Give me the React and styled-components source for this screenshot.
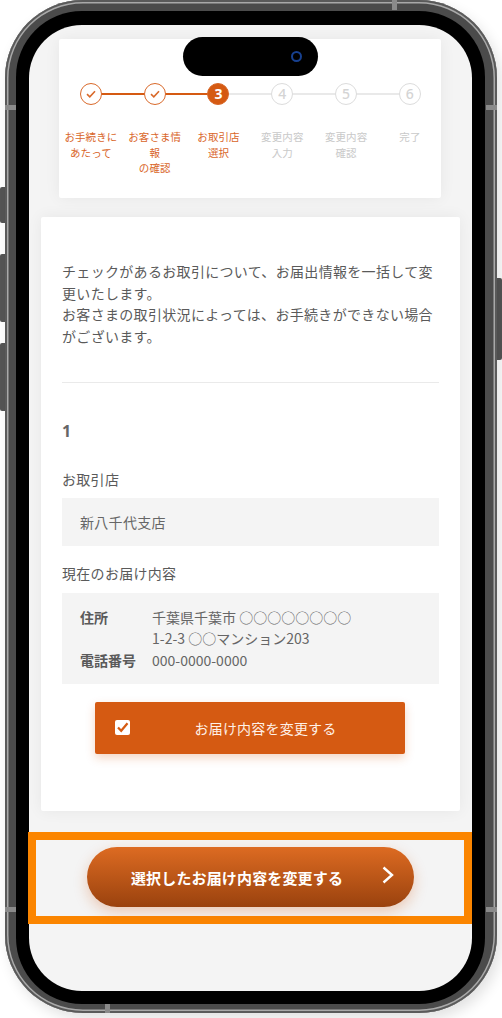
import React from "react";
import styled, { createGlobalStyle } from "styled-components";

const Global = createGlobalStyle`
  html, body { margin: 0; padding: 0; background: #fff; }
  body {
    width: 502px;
    height: 1018px;
    overflow: hidden;
    font-family: "Noto Sans CJK JP", "Noto Sans", sans-serif;
  }
  * { box-sizing: border-box; }
`;

const Page = styled.div`
  position: relative;
  width: 502px;
  height: 1018px;
  padding: 0 5px;
`;

const SideButton = styled.div`
  position: absolute;
  width: 6px;
  top: ${(p) => p.$top}px;
  height: ${(p) => p.$height}px;
  ${(p) => (p.$right ? "right: 0;" : "left: 0;")}
  background: #555;
  border-radius: ${(p) => (p.$right ? "0 2px 2px 0" : "2px 0 0 2px")};
`;

const Shell = styled.div`
  position: relative;
  width: 492px;
  height: 1013px;
  padding: 11px 12px 9px 11px;
  border-radius: 78px;
  background: #4b4b4b;
  box-shadow: inset 0 0 0 2px #5a5a5a, inset 0 0 0 3.5px #a9a9a9,
    4px 6px 14px rgba(0, 0, 0, 0.12);
`;

const Band = styled.div`
  position: absolute;
  background: #8a8a8a;
  ${(p) =>
    p.$vertical
      ? `width: 5px; height: 10px; left: ${p.$pos}px; ${p.$bottom ? "bottom: 0;" : "top: 0;"}`
      : `width: 11px; height: 5px; top: ${p.$pos}px; ${p.$right ? "right: 0;" : "left: 0;"}`}
`;

const Bezel = styled.div`
  position: relative;
  height: 100%;
  padding: 14px 13px 13px 13px;
  border-radius: 66px;
  background: #000;
`;

const Screen = styled.div`
  height: 100%;
  padding-top: 14px;
  border-radius: 53px;
  background: #f4f4f4;
  color: #5a5a5a;
`;

const Island = styled.div`
  position: absolute;
  top: 26px;
  left: 167px;
  width: 135px;
  height: 39px;
  padding-right: 16px;
  display: flex;
  align-items: center;
  justify-content: flex-end;
  border-radius: 20px;
  background: #000;
`;

const Camera = styled.span`
  width: 11px;
  height: 11px;
  border: 2px solid #17408f;
  border-radius: 50%;
`;

const StepCard = styled.div`
  width: 382px;
  height: 159px;
  margin-left: 30px;
  padding-top: 44px;
  display: grid;
  grid-template-columns: repeat(6, 63.8px);
  align-items: start;
  border-radius: 2px;
  background: #fff;
  box-shadow: 0 0 16px rgba(0, 0, 0, 0.06);
`;

const Step = styled.div`
  position: relative;
  display: flex;
  flex-direction: column;
  align-items: center;

  &::before {
    content: "";
    position: absolute;
    top: 10px;
    left: 50%;
    width: 100%;
    height: 2px;
    background: ${(p) => (p.$lineDone ? "#d55a12" : "#e9e9e9")};
    display: ${(p) => (p.$last ? "none" : "block")};
  }
`;

const Circle = styled.div`
  position: relative;
  width: 22px;
  height: 22px;
  display: flex;
  align-items: center;
  justify-content: center;
  border-radius: 50%;
  font-family: "Noto Sans", sans-serif;
  font-size: 14px;
  font-weight: ${(p) => (p.$state === "current" ? 700 : 500)};
  line-height: 1;
  background: ${(p) => (p.$state === "current" ? "#d55a12" : "#fff")};
  color: ${(p) => (p.$state === "current" ? "#fff" : "#d4d4d4")};
  border: 1px solid ${(p) => (p.$state === "todo" ? "#dcdcdc" : "#d9692a")};
`;

const StepLabel = styled.div`
  width: 100%;
  margin-top: 24px;
  padding: 0 3px;
  text-align: center;
  font-size: 10.5px;
  letter-spacing: 0.1px;
  line-height: 15.5px;
  color: ${(p) => (p.$todo ? "#c9c9c9" : "#d9662a")};
`;

const MainCard = styled.div`
  width: 419px;
  height: 594px;
  margin: 19px 0 0 12px;
  padding: 44px 21px 0;
  border-radius: 2px;
  background: #fff;
  box-shadow: 0 0 16px rgba(0, 0, 0, 0.06);
`;

const Lead = styled.p`
  margin: 0 0 34px;
  font-size: 14px;
  letter-spacing: 0.32px;
  line-height: 21.7px;
`;

const Divider = styled.hr`
  margin: 0;
  border: 0;
  border-top: 1px solid #eaeaea;
`;

const Number = styled.div`
  margin-top: 36px;
  font-family: "Noto Sans", sans-serif;
  font-size: 16px;
  font-weight: 700;
  line-height: 24px;
  color: #666;
`;

const FieldLabel = styled.div`
  margin-top: ${(p) => p.$top}px;
  font-size: 14px;
  letter-spacing: 0.3px;
  line-height: 20px;
`;

const ShopBox = styled.div`
  height: 48px;
  margin-top: 9px;
  padding-left: 18px;
  display: flex;
  align-items: center;
  background: #f4f4f4;
  font-size: 14px;
  letter-spacing: 0.3px;
  color: #666;
`;

const InfoBox = styled.div`
  height: 91px;
  margin-top: 10px;
  padding: 14px 18px 0;
  display: grid;
  grid-template-columns: 72px 1fr;
  align-content: start;
  background: #f4f4f4;
  font-size: 14px;
  line-height: 21.5px;
`;

const InfoKey = styled.div`
  font-weight: 700;
  color: #5a5a5a;
`;

const InfoValue = styled.div`
  color: #666;
`;

const ChangeButton = styled.button`
  width: 310px;
  height: 52px;
  margin: 18px 0 0 33px;
  padding: 0 0 0 20px;
  display: flex;
  align-items: center;
  border: 0;
  border-radius: 2px;
  background: #d55a12;
  box-shadow: 0 4px 10px rgba(213, 90, 18, 0.25);
  font-family: inherit;
  font-size: 14px;
  letter-spacing: 0.2px;
  color: #fff0e6;
`;

const ChangeText = styled.span`
  flex: 1;
  padding-right: 4px;
  text-align: center;
`;

const Highlight = styled.div`
  width: 444px;
  height: 92px;
  margin: 21px 0 0 -1px;
  padding: 7px 0 0 51px;
  border: 8px solid #fb8500;
`;

const SubmitButton = styled.button`
  position: relative;
  width: 327px;
  height: 60px;
  padding: 0 27px 0 0;
  display: flex;
  align-items: center;
  justify-content: center;
  border: 0;
  border-radius: 30px;
  background: linear-gradient(180deg, #dd6b22 0%, #9a420e 100%);
  box-shadow: 0 5px 14px rgba(213, 90, 18, 0.28);
  font-family: inherit;
  font-size: 15px;
  font-weight: 700;
  letter-spacing: 0.15px;
  color: #fff;
`;

const Chevron = styled.svg`
  position: absolute;
  top: 19px;
  right: 20px;
`;

const steps = [
  { label: "お手続きにあたって", state: "done" },
  { label: "お客さま情報", label2: "の確認", state: "done" },
  { label: "お取引店", label2: "選択", state: "current" },
  { label: "変更内容", label2: "入力", state: "todo" },
  { label: "変更内容", label2: "確認", state: "todo" },
  { label: "完了", state: "todo" },
];

function CheckMark() {
  return (
    <svg width="10" height="8" viewBox="0 0 10 8" fill="none">
      <path d="M1 4.2 L3.8 6.8 L9 1.2" stroke="#d9692a" strokeWidth="1.6" />
    </svg>
  );
}

function App() {
  return (
    <Page>
      <Global />
      <SideButton $top={187} $height={36} />
      <SideButton $top={254} $height={68} />
      <SideButton $top={343} $height={68} />
      <SideButton $right $top={278} $height={82} />
      <Shell>
        <Band $pos={105} />
        <Band $pos={105} $right />
        <Band $pos={907} />
        <Band $pos={907} $right />
        <Band $vertical $pos={387} />
        <Band $vertical $bottom $pos={100} />
        <Bezel>
          <Screen>
            <StepCard>
              {steps.map((s, i) => (
                <Step
                  key={i}
                  $lineDone={s.state === "done"}
                  $last={i === steps.length - 1}
                >
                  <Circle $state={s.state}>
                    {s.state === "done" ? <CheckMark /> : i + 1}
                  </Circle>
                  <StepLabel $todo={s.state === "todo"}>
                    {s.label}
                    {s.label2 && <br />}
                    {s.label2}
                  </StepLabel>
                </Step>
              ))}
            </StepCard>

            <MainCard>
              <Lead>
                チェックがあるお取引について、お届出情報を一括して変更いたします。
                <br />
                お客さまの取引状況によっては、お手続きができない場合がございます。
              </Lead>
              <Divider />
              <Number>1</Number>
              <FieldLabel $top={26}>お取引店</FieldLabel>
              <ShopBox>新八千代支店</ShopBox>
              <FieldLabel $top={17}>現在のお届け内容</FieldLabel>
              <InfoBox>
                <InfoKey>住所</InfoKey>
                <InfoValue>
                  千葉県千葉市 ○○○○○○○○
                  <br />
                  1-2-3 ○○マンション203
                </InfoValue>
                <InfoKey>電話番号</InfoKey>
                <InfoValue>000-0000-0000</InfoValue>
              </InfoBox>
              <ChangeButton>
                <svg width="15" height="15" viewBox="0 0 15 15">
                  <rect width="15" height="15" rx="2" fill="#fff" />
                  <path
                    d="M3 7.5 L6.2 10.8 L12.5 3.2"
                    fill="none"
                    stroke="#d55a12"
                    strokeWidth="2.2"
                  />
                </svg>
                <ChangeText>お届け内容を変更する</ChangeText>
              </ChangeButton>
            </MainCard>

            <Highlight>
              <SubmitButton>
                選択したお届け内容を変更する
                <Chevron width="12" height="18" viewBox="0 0 12 18" fill="none">
                  <path
                    d="M1.5 1.5 L10 9 L1.5 16.5"
                    stroke="#fff"
                    strokeWidth="2.4"
                  />
                </Chevron>
              </SubmitButton>
            </Highlight>
          </Screen>
          <Island>
            <Camera />
          </Island>
        </Bezel>
      </Shell>
    </Page>
  );
}

export default App;
